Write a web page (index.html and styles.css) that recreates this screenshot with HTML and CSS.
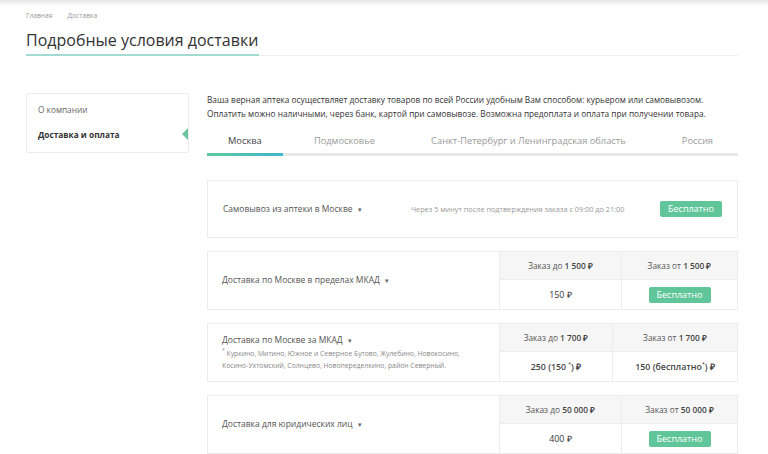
FILE: index.html
```html
<!DOCTYPE html>
<html lang="ru">
<head>
<meta charset="utf-8">
<title>Подробные условия доставки</title>
<link rel="stylesheet" href="styles.css">
</head>
<body>
<div class="topshade"></div>
<div class="page">
  <nav class="crumbs"><span>Главная</span><span>Доставка</span></nav>
  <div class="title-wrap"><h1 class="title">Подробные условия доставки</h1></div>

  <div class="main">
    <aside class="side">
      <div class="side-item">О компании</div>
      <div class="side-item active">Доставка и оплата<span class="marker"></span></div>
    </aside>

    <section class="content">
      <p class="intro">Ваша верная аптека осуществляет доставку товаров по всей России удобным Вам способом: курьером или самовывозом. Оплатить можно наличными, через банк, картой при самовывозе. Возможна предоплата и оплата при получении товара.</p>

      <div class="tabs">
        <div class="tab active">Москва</div>
        <div class="tab">Подмосковье</div>
        <div class="tab">Санкт-Петербург и Ленинградская область</div>
        <div class="tab">Россия</div>
      </div>

      <div class="card card-simple">
        <div class="c-title">Самовывоз из аптеки в Москве <span class="caret">▾</span></div>
        <div class="c-note">Через 5 минут после подтверждения заказа с 09:00 до 21:00</div>
        <span class="badge">Бесплатно</span>
      </div>

      <div class="card card-table">
        <div class="c-left"><div class="c-title">Доставка по Москве в пределах МКАД <span class="caret">▾</span></div></div>
        <div class="th"><span>Заказ до <b>1 500 ₽</b></span></div>
        <div class="th"><span>Заказ от <b>1 500 ₽</b></span></div>
        <div class="td">150 ₽</div>
        <div class="td"><span class="badge">Бесплатно</span></div>
      </div>

      <div class="card card-table card-wide2">
        <div class="c-left">
          <div class="c-title">Доставка по Москве за МКАД <span class="caret">▾</span></div>
          <div class="c-sub"><sup>*</sup> Куркино, Митино, Южное и Северное Бутово, Жулебино, Новокосино,<br>Косино-Ухтомский, Солнцево, Новопеределкино, район Северный.</div>
        </div>
        <div class="th"><span>Заказ до <b>1 700 ₽</b></span></div>
        <div class="th"><span>Заказ от <b>1 700 ₽</b></span></div>
        <div class="td strong"><span>250 (150 <sup>*</sup>) ₽</span></div>
        <div class="td strong"><span>150 (бесплатно<sup>*</sup>) ₽</span></div>
      </div>

      <div class="card card-table">
        <div class="c-left"><div class="c-title">Доставка для юридических лиц <span class="caret">▾</span></div></div>
        <div class="th"><span>Заказ до <b>50 000 ₽</b></span></div>
        <div class="th"><span>Заказ от <b>50 000 ₽</b></span></div>
        <div class="td">400 ₽</div>
        <div class="td"><span class="badge">Бесплатно</span></div>
      </div>
    </section>
  </div>
</div>
</body>
</html>
```

FILE: styles.css
```css
* { box-sizing: border-box; }
html, body { margin: 0; padding: 0; background: #fff; }
body {
  font-family: "Open Sans", "Liberation Sans", sans-serif;
  color: #333;
  font-size: 8.3px;
}
.topshade {
  height: 6px;
  background: linear-gradient(#e4e4e4, #ffffff);
}
.page {
  width: 738px;
  padding-left: 26px;
}
.crumbs {
  display: flex;
  gap: 15px;
  font-size: 6.7px;
  line-height: 12px;
  color: #999;
  margin-top: 4px;
}
.title-wrap {
  border-bottom: 1px solid #eeeeee;
  margin-top: 7px;
}
.title {
  display: inline-block;
  margin: 0 0 -1px 0;
  font-weight: 400;
  font-size: 16px;
  line-height: 22px;
  color: #333;
  padding-bottom: 3px;
  padding-right: 1px;
  border-bottom: 2px solid #a3dbd2;
}
.main {
  display: grid;
  grid-template-columns: 163px 1fr;
  gap: 18px;
  margin-top: 37px;
  align-items: start;
}
.side {
  border: 1px solid #ececec;
  border-radius: 2px;
  padding: 3px 0 5px;
}
.side-item {
  position: relative;
  height: 25px;
  line-height: 25px;
  padding-left: 11px;
  color: #666;
}
.side-item.active { color: #333; font-weight: 700; }
.marker {
  position: absolute;
  right: 0;
  top: 6px;
  width: 0;
  height: 0;
  border-top: 6px solid transparent;
  border-bottom: 6px solid transparent;
  border-right: 6px solid #6cc3a0;
}
.content { min-width: 0; }
.intro {
  margin: 0;
  line-height: 14px;
  color: #333;
}
.tabs {
  display: flex;
  justify-content: space-between;
  margin-top: 13px;
  border-bottom: 3px solid #e8e8e8;
  font-size: 9.3px;
  line-height: 14px;
}
.tab {
  padding: 0 25px 5px;
  color: #999;
}
.tab.active {
  padding: 0 21px 5px;
  color: #444;
  margin-bottom: -3px;
  border-bottom: 3px solid #5cc6a0;
  border-image: linear-gradient(90deg, #62c99c, #3eb6cf) 1;
}
.card {
  border: 1px solid #ececec;
  margin-bottom: 13px;
}
.card-simple {
  margin-top: 24px;
  height: 58px;
  display: flex;
  align-items: center;
  padding: 0 15px;
}
.c-title {
  color: #555;
  font-size: 8.5px;
  line-height: 14px;
  white-space: nowrap;
}
.card-simple .c-title { width: 188px; }
.caret {
  font-size: 7px;
  margin-left: 3px;
  color: #666;
}
.c-note {
  flex: 1;
  font-size: 7.3px;
  color: #999;
}
.badge {
  display: inline-block;
  background: #60c69a;
  color: #fff;
  font-size: 9px;
  line-height: 16px;
  height: 16px;
  width: 62px;
  text-align: center;
  border-radius: 2px;
}
.card-table {
  display: grid;
  grid-template-columns: 292px 121px 1fr;
  grid-template-rows: 28px 29px;
}
.card-wide2 { grid-template-columns: 292px 112px 1fr; }
.c-left {
  grid-row: 1 / 3;
  grid-column: 1;
  border-right: 1px solid #ececec;
  display: flex;
  flex-direction: column;
  justify-content: center;
  padding-left: 14px;
}
.c-sub {
  font-size: 6.8px;
  line-height: 12px;
  color: #888;
}
sup { font-size: 5px; vertical-align: 4px; line-height: 0; }
.th, .td {
  display: flex;
  align-items: center;
  justify-content: center;
  white-space: nowrap;
}
.th {
  background: #f6f6f6;
  border-bottom: 1px solid #ececec;
  color: #555;
}
.th b { font-weight: 600; color: #444; }
.th + .th, .td + .td { border-left: 1px solid #ececec; }
.td { color: #333; font-size: 8.8px; }
.td.strong { font-weight: 600; color: #444; }
```
